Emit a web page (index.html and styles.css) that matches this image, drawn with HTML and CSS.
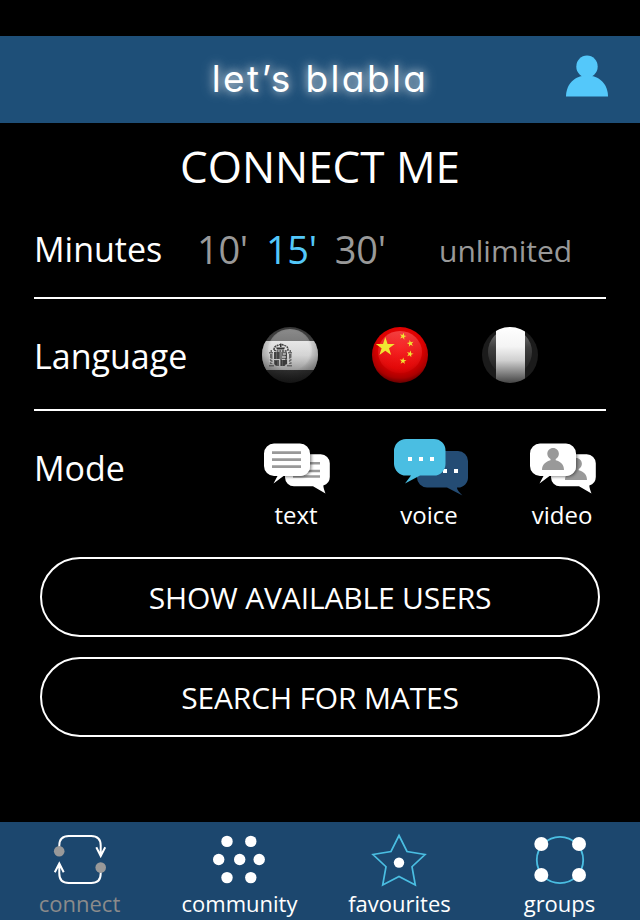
FILE: index.html
```html
<!DOCTYPE html>
<html lang="en">
<head>
    <meta charset="UTF-8">
    <meta name="viewport" content="width=device-width, initial-scale=1.0">
    <title>let's blabla</title>
    <link rel="stylesheet" href="styles.css">
</head>
<body>
    <header class="header">
        <div class="logo">let’s blabla</div>
        <svg class="profile" viewBox="0 0 42 42">
            <ellipse cx="21" cy="11.5" rx="10.7" ry="11"/>
            <path d="M0 41.5C0 29 9 20.5 21 20.5S42 29 42 41.5z"/>
        </svg>
    </header>

    <main class="content">
        <h1>CONNECT ME</h1>

        <section class="row minutes">
            <h2>Minutes</h2>
            <div class="times">
                <span>10'</span>
                <span class="active">15'</span>
                <span>30'</span>
            </div>
            <span class="unlimited">unlimited</span>
        </section>

        <section class="row language">
            <h2>Language</h2>
            <div class="flags">
                <svg class="flag" viewBox="0 0 56 56">
                    <defs>
                        <clipPath id="ball"><circle cx="28" cy="28" r="28"/></clipPath>
                        <linearGradient id="es-dark" x1="0" y1="0" x2="0" y2="1">
                            <stop offset="0" stop-color="#3c3c3c"/>
                            <stop offset=".25" stop-color="#484848"/>
                            <stop offset=".75" stop-color="#303030"/>
                            <stop offset="1" stop-color="#1c1c1c"/>
                        </linearGradient>
                        <linearGradient id="es-light" x1="0" y1="0" x2="0" y2="1">
                            <stop offset="0" stop-color="#dedede"/>
                            <stop offset=".5" stop-color="#cccccc"/>
                            <stop offset="1" stop-color="#989898"/>
                        </linearGradient>
                        <linearGradient id="shine" x1="0" y1="0" x2="0" y2="1">
                            <stop offset="0" stop-color="#fff" stop-opacity=".4"/>
                            <stop offset="1" stop-color="#fff" stop-opacity="0"/>
                        </linearGradient>
                        <radialGradient id="edge" cx=".5" cy=".42" r=".58">
                            <stop offset=".6" stop-color="#000" stop-opacity="0"/>
                            <stop offset="1" stop-color="#000" stop-opacity=".3"/>
                        </radialGradient>
                    </defs>
                    <g clip-path="url(#ball)">
                        <rect width="56" height="56" fill="url(#es-dark)"/>
                        <rect y="14" width="56" height="29" fill="url(#es-light)"/>
                        <ellipse cx="28" cy="23" rx="22" ry="21" fill="url(#shine)"/>
                        <g fill="#333">
                            <path d="M12 23c0-5 4-4 7-6 3 2 7 1 7 6l-2 1h-10z" fill="none" stroke="#444" stroke-width="1.5" stroke-dasharray="2 .7"/>
                            <path d="M14 20.5h9l-1 2h-7zM18 17h1.5v3H18z"/>
                            <path d="M12 25h6v7h-6zM20 25h5v7h-5z" fill="#666"/>
                            <path d="M12 33h5v6h-3l-2-2zM19 33h6v4l-3 2h-3z" fill="#555"/>
                            <path d="M13 25v7M16 25v7M19 25v14M22 33v6M24 26v11M14 34v4" stroke="#222" stroke-width="1"/>
                            <path d="M21 27h3M20 30h4" stroke="#eee"/>
                            <path d="M8 27h2.5v10H8zM27 27h2.5v10H27zM7 25h4v1.5H7zM26 25h4v1.5h-4zM7 38h5v1.5H7zM25 38h5v1.5h-5zM8.5 23H10v2H8.5zM27.5 23H29v2h-1.500z" fill="#666"/>
                            <path d="M7 31l4 2M7 34l4 2M26 33l4-2M26 36l4-2" stroke="#ddd" stroke-width=".8"/>
                        </g>
                        <rect width="56" height="56" fill="url(#edge)"/>
                    </g>
                </svg>
                <svg class="flag" viewBox="0 0 56 56">
                    <defs>
                        <radialGradient id="cn" cx=".5" cy=".35" r=".66">
                            <stop offset="0" stop-color="#f30c0c"/>
                            <stop offset=".6" stop-color="#dc0000"/>
                            <stop offset=".85" stop-color="#a90000"/>
                            <stop offset="1" stop-color="#5c0000"/>
                        </radialGradient>
                        <linearGradient id="cn-shine" x1="0" y1="0" x2="0" y2="1">
                            <stop offset="0" stop-color="#ff7070" stop-opacity=".55"/>
                            <stop offset="1" stop-color="#ff2a2a" stop-opacity=".1"/>
                        </linearGradient>
                        <path id="star" d="M0-10 2.300-3.100H9.500L3.700 1.200 5.900 8.100 0 3.800-5.900 8.100-3.700 1.200-9.500-3.100H-2.300z"/>
                    </defs>
                    <g clip-path="url(#ball)">
                        <rect width="56" height="56" fill="url(#cn)"/>
                        <ellipse cx="28" cy="25" rx="22" ry="21" fill="url(#cn-shine)"/>
                        <g fill="#f0e532">
                            <use href="#star" transform="translate(13.300 20)"/>
                            <use href="#star" transform="translate(31 9.300) rotate(15) scale(.36)"/>
                            <use href="#star" transform="translate(38.300 16.500) rotate(-12) scale(.36)"/>
                            <use href="#star" transform="translate(38 27) rotate(15) scale(.36)"/>
                            <use href="#star" transform="translate(31 34) rotate(5) scale(.36)"/>
                        </g>
                    </g>
                </svg>
                <svg class="flag" viewBox="0 0 56 56">
                    <defs>
                        <linearGradient id="fr-light" x1="0" y1="0" x2="0" y2="1">
                            <stop offset="0" stop-color="#fff"/>
                            <stop offset=".35" stop-color="#f4f4f4"/>
                            <stop offset=".6" stop-color="#cfcfcf"/>
                            <stop offset="1" stop-color="#444"/>
                        </linearGradient>
                        <linearGradient id="fr-shine" x1="0" y1="0" x2="0" y2="1">
                            <stop offset="0" stop-color="#777"/>
                            <stop offset=".4" stop-color="#404040"/>
                            <stop offset="1" stop-color="#1b1b1b"/>
                        </linearGradient>
                    </defs>
                    <g clip-path="url(#ball)">
                        <rect width="56" height="56" fill="#1b1b1b"/>
                        <ellipse cx="28" cy="25" rx="22" ry="23" fill="url(#fr-shine)"/>
                        <rect x="14" width="29" height="56" fill="url(#fr-light)"/>
                    </g>
                </svg>
            </div>
        </section>

        <section class="row mode">
            <h2>Mode</h2>
            <div class="modes">
                <div class="mode-item">
                    <svg viewBox="0 0 80 60">
                        <defs>
                            <filter id="shadow" x="-20%" y="-20%" width="150%" height="150%">
                                <feDropShadow dx="1.500" dy="1" stdDeviation="1.500" flood-color="#000" flood-opacity=".45"/>
                            </filter>
                            <clipPath id="back"><rect x="29" y="17" width="45" height="32" rx="9"/></clipPath>
                            <path id="bubble-back" d="M38 17.300H64.800a9 9 0 0 1 9 9V40a9 9 0 0 1-6.500 8.500C67.500 51 68.500 54 69.500 56.500L57 49.300H38a9 9 0 0 1-9-9V26.300a9 9 0 0 1 9-9z"/>
                            <path id="bubble-front" d="M18 6.500H44A10 10 0 0 1 54 16.500V29A10 10 0 0 1 44 39H27.500L17.500 46.500 21.500 39H18A10 10 0 0 1 8 29V16.500A10 10 0 0 1 18 6.500z"/>
                        </defs>
                        <use href="#bubble-back" fill="#fff"/>
                        <path d="M37 26.300H64M37 34H64M37 39.500H64" stroke="#999" stroke-width="2.500"/>
                        <g clip-path="url(#back)"><use href="#bubble-front" fill="#fff" filter="url(#shadow)"/></g>
                        <use href="#bubble-front" fill="#fff"/>
                        <path d="M16 15.700H45M16 22.700H45M16 29.700H45" stroke="#999" stroke-width="2.700"/>
                    </svg>
                    <span>text</span>
                </div>
                <div class="mode-item">
                    <svg viewBox="0 0 80 60">
                        <path d="M38 14H69a10 10 0 0 1 10 10V40a10 10 0 0 1-10 10.500H68C68 53 71 56 73.500 58.500L58 50.500H38a10 10 0 0 1-10-10V24a10 10 0 0 1 10-10z" fill="#244c74"/>
                        <path d="M54 32h4v4h-4zM65 32h4v4h-4z" fill="#fff"/>
                        <path d="M17 2H45A11.500 11.500 0 0 1 56.500 13.500V27A11.500 11.500 0 0 1 45 38.500H31L16 46.500 22 38.500H17A12 12 0 0 1 5 27V14A12 12 0 0 1 17 2z" fill="#4abee2"/>
                        <path d="M19 20h4v4h-4zM30 20h4v4h-4zM41 20h4v4h-4z" fill="#fff"/>
                    </svg>
                    <span>voice</span>
                </div>
                <div class="mode-item">
                    <svg viewBox="0 0 80 60">
                        <use href="#bubble-back" fill="#fff"/>
                        <path id="person" d="M43 43c0-5.500 4-8.500 8.500-9.700V32c-2-1.200-3.200-3-3.200-5.200 0-3.200 2.600-5.800 5.800-5.800s5.800 2.600 5.800 5.800c0 2.200-1.200 4-3.200 5.200v1.300C61.500 34.500 65 37.500 65 43z" fill="#999"/>
                        <g clip-path="url(#back)"><use href="#bubble-front" fill="#fff" filter="url(#shadow)"/></g>
                        <use href="#bubble-front" fill="#fff"/>
                        <use href="#person" transform="translate(-23 -10)"/>
                    </svg>
                    <span>video</span>
                </div>
            </div>
        </section>

        <div class="actions">
            <button>SHOW AVAILABLE USERS</button>
            <button>SEARCH FOR MATES</button>
        </div>
    </main>

    <nav class="tabs">
        <a class="tab current">
            <svg viewBox="0 0 60 56">
                <g fill="none" stroke="#fff" stroke-width="2">
                    <path d="M9.300 18V13.500Q9.300 4 18.800 4H41.200Q50.700 4 50.700 13.500V23M46.300 15.300 50.700 24 55.200 15.300"/>
                    <path d="M50.700 36V41.500Q50.700 51 41.200 51H18.800Q9.300 51 9.300 41.500V32M4.800 40.300 9.300 31.500 13.700 40.300"/>
                </g>
                <circle cx="9.200" cy="19.300" r="5.300" fill="#999"/>
                <circle cx="50.700" cy="35.600" r="5.300" fill="#999"/>
            </svg>
            <span>connect</span>
        </a>
        <a class="tab">
            <svg viewBox="0 0 60 56" fill="#fff">
                <circle cx="17" cy="9.400" r="5.700"/>
                <circle cx="40.800" cy="9.400" r="5.700"/>
                <circle cx="8.700" cy="27.500" r="5.700"/>
                <circle cx="29.700" cy="27.500" r="5.700"/>
                <circle cx="49.200" cy="27.500" r="5.700"/>
                <circle cx="17" cy="45.600" r="5.700"/>
                <circle cx="40.800" cy="45.600" r="5.700"/>
            </svg>
            <span>community</span>
        </a>
        <a class="tab">
            <svg viewBox="0 0 60 56">
                <path d="M29 3.500 37 19.500 55 22.500 42 34.700 45.300 53 29 44.500 12.700 53 16 34.700 3 22.500 21 19.500z" fill="none" stroke="#4abee2" stroke-width="1.700"/>
                <circle cx="29" cy="30.600" r="5.200" fill="#fff"/>
            </svg>
            <span>favourites</span>
        </a>
        <a class="tab">
            <svg viewBox="0 0 60 56">
                <circle cx="30" cy="28" r="23.200" fill="none" stroke="#4abee2" stroke-width="1.800"/>
                <g fill="#fff">
                    <circle cx="11.300" cy="12" r="7"/>
                    <circle cx="49" cy="12" r="7"/>
                    <circle cx="11.300" cy="43" r="7"/>
                    <circle cx="49" cy="43" r="7"/>
                </g>
            </svg>
            <span>groups</span>
        </a>
    </nav>
</body>
</html>
```
FILE: styles.css
```css
* {
    box-sizing: border-box;
}

body {
    margin: 0;
    height: 920px;
    padding-top: 36px;
    display: flex;
    flex-direction: column;
    overflow: hidden;
    background: #000;
    color: #fff;
    font-family: "Open Sans", sans-serif;
}

svg {
    display: block;
}

.header {
    height: 87px;
    display: grid;
    grid-template-columns: 1fr auto 1fr;
    align-items: center;
    padding: 0 32px;
    background: #1e4f78;
}

.logo {
    grid-column: 2;
    margin-bottom: 1px;
    font-family: Inter, sans-serif;
    font-size: 37px;
    line-height: 44px;
    letter-spacing: 2.4px;
    font-feature-settings: "cv11" 1;
    text-shadow: 0 0 8px rgba(255, 255, 255, 0.6), 0 0 14px rgba(255, 255, 255, 0.5);
}

.profile {
    width: 42px;
    height: 42px;
    justify-self: end;
    margin-bottom: 7px;
    fill: #54c8fa;
}

.content {
    flex: 1;
    padding: 0 34px;
}

h1 {
    margin: 0;
    padding-top: 13px;
    height: 77px;
    font-size: 44px;
    line-height: 60px;
    font-weight: 400;
    text-align: center;
}

h2 {
    margin: 0;
    width: 163px;
    font-size: 34px;
    line-height: 48px;
    font-weight: 400;
}

.row {
    display: flex;
}

.minutes {
    height: 99px;
    padding-top: 25px;
    border-bottom: 2px solid #fff;
    color: #999;
}

.minutes h2 {
    color: #fff;
}

.times {
    display: flex;
    gap: 18px;
    width: 242px;
    font-size: 38px;
    line-height: 48px;
    letter-spacing: -0.3px;
}

.active {
    color: #54c8fa;
}

.unlimited {
    font-size: 30px;
    line-height: 51px;
}

.language {
    height: 112px;
    padding-top: 28px;
    border-bottom: 2px solid #fff;
}

.language h2 {
    padding-top: 5px;
}

.flags {
    display: flex;
    gap: 54px;
    margin-left: 65px;
}

.flag {
    width: 56px;
    height: 56px;
}

.mode {
    height: 146px;
    padding-top: 26px;
}

.mode h2 {
    padding-top: 7px;
}

.modes {
    display: flex;
    justify-content: space-between;
    width: 346px;
    margin-left: 59px;
}

.mode-item {
    width: 80px;
    font-size: 24px;
    line-height: 36px;
    text-align: center;
}

.mode-item svg {
    width: 80px;
    height: 60px;
}

.actions {
    display: flex;
    flex-direction: column;
    gap: 20px;
    padding: 0 6px;
}

button {
    height: 80px;
    padding: 2px 0 0;
    border: 2px solid #fff;
    border-radius: 40px;
    background: none;
    color: inherit;
    font: 30px/40px "Open Sans", sans-serif;
    letter-spacing: -0.15px;
}

.tabs {
    display: grid;
    grid-template-columns: repeat(4, 1fr);
    height: 98px;
    padding-top: 10px;
    background: #1c476e;
}

.tab {
    font-size: 22px;
    line-height: 30px;
    text-align: center;
}

.tab svg {
    width: 60px;
    height: 56px;
    margin: 0 auto;
}

.tab span {
    margin-right: 1px;
}

.current {
    color: #8b8b8b;
}
```
